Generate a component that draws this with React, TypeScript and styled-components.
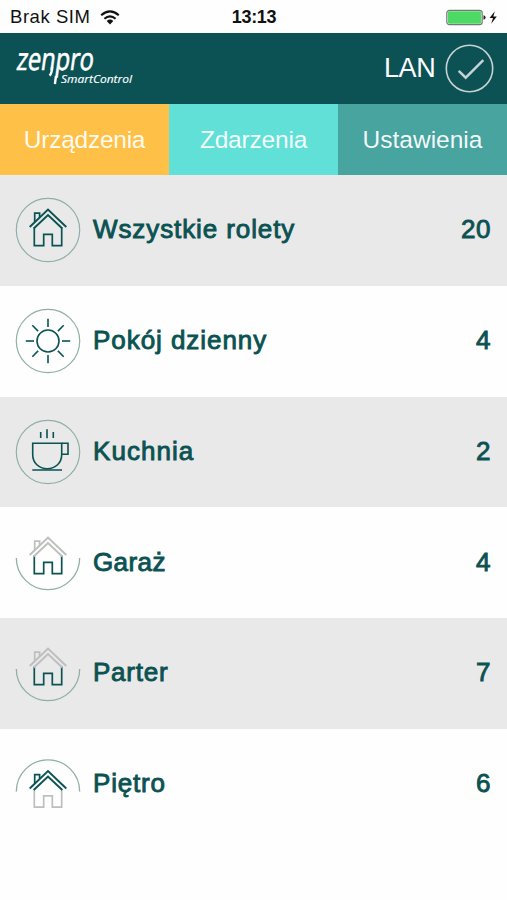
import React from 'react';
import styled, { createGlobalStyle } from 'styled-components';

const INK = '#0b5252';
const FADED = '#bcbfbe';

const GlobalStyle = createGlobalStyle`
  * { box-sizing: border-box; }
  body {
    margin: 0;
    background: #fefefe;
    font-family: "Liberation Sans", Arial, sans-serif;
  }
`;

const Screen = styled.main`
  width: 507px;
  height: 900px;
  overflow: hidden;
  display: flex;
  flex-direction: column;
`;

const StatusBar = styled.div`
  height: 32.5px;
  flex: none;
  display: grid;
  grid-template-columns: 1fr auto 1fr;
  align-items: center;
  padding: 2px 9px 0 10px;
  font-size: 18px;
  color: #111;
`;

const Carrier = styled.div`
  display: flex;
  align-items: center;
  gap: 10px;
  font-size: 18.5px;
  letter-spacing: 0.55px;
`;

const Clock = styled.div`
  font-weight: 700;
  font-size: 18px;
  letter-spacing: -0.3px;
`;

const Power = styled.div`
  display: flex;
  justify-content: flex-end;
`;

const Header = styled.header`
  height: 71.5px;
  flex: none;
  display: flex;
  align-items: center;
  justify-content: space-between;
  background: #0c5255;
  padding: 0 13.5px 0 14px;
`;

const Connection = styled.div`
  display: flex;
  align-items: center;
  gap: 9px;
  color: #fff;
  font-size: 27px;
  letter-spacing: -0.3px;
`;

const Tabs = styled.nav`
  height: 71px;
  flex: none;
  display: grid;
  grid-template-columns: repeat(3, 1fr);
`;

const Tab = styled.button<{ $color: string; $spacing: number }>`
  border: 0;
  padding: 0;
  background: ${(p) => p.$color};
  color: #fffffff2;
  font: 24.5px "Liberation Sans", Arial, sans-serif;
  letter-spacing: ${(p) => p.$spacing}px;
`;

const List = styled.ul`
  margin: 0;
  padding: 0;
  list-style: none;
`;

const Row = styled.li`
  height: 110.8px;
  display: flex;
  align-items: center;
  padding: 0 16px 0 15px;
  background: #fefefe;
  color: ${INK};
  font-size: 26px;

  &:nth-child(odd) {
    background: #e9e9e9;
  }
`;

const RoomName = styled.span<{ $spacing: number }>`
  flex: 1;
  margin-left: 12px;
  padding-bottom: 1.4px;
  letter-spacing: ${(p) => p.$spacing}px;
  -webkit-text-stroke: 0.9px ${INK};
`;

const Count = styled.span`
  padding-bottom: 1.4px;
  letter-spacing: 0.5px;
  -webkit-text-stroke: 0.9px ${INK};
`;

const IconSvg = styled.svg`
  display: block;
  flex: none;
  fill: none;
  overflow: visible;
`;

function Ring() {
  return <circle r="31.7" stroke="#8fb0a8" strokeWidth="1.2" />;
}

function House({ roof, body }: { roof: string; body: string }) {
  return (
    <g strokeWidth="1.7">
      <path d="M-13.7 -2.5V15.7H-4.3V4.4H4.3V15.7H13.7V-2.5" stroke={body} />
      <path d="M-18.3 -3L0 -20.5L18.3 -3M-14.3 -1.5L0 -15L14.3 -1.5" stroke={roof} strokeWidth="1.9" />
      <path d="M-13.3 -8V-16.8H-8.4V-13" stroke={roof} />
    </g>
  );
}

type IconKind = 'house' | 'sun' | 'cup' | 'lower' | 'upper';

function RoomIcon({ kind }: { kind: IconKind }) {
  switch (kind) {
    case 'house':
      return (
        <IconSvg width="66" height="66" viewBox="-33 -33 66 66">
          <Ring />
          <House roof={INK} body={INK} />
        </IconSvg>
      );
    case 'sun':
      return (
        <IconSvg width="66" height="66" viewBox="-33 -33 66 66">
          <Ring />
          <g stroke={INK} strokeWidth="1.6">
            <circle r="11" />
            {[0, 45, 90, 135, 180, 225, 270, 315].map((angle) => (
              <path key={angle} d="M0 -14V-22.2" transform={`rotate(${angle})`} />
            ))}
          </g>
        </IconSvg>
      );
    case 'cup':
      return (
        <IconSvg width="66" height="66" viewBox="-33 -33 66 66">
          <Ring />
          <g stroke={INK} strokeWidth="1.6">
            <path d="M-15.3 -8.7H13.7V2.5C13.7 11 7.5 16.7 -0.8 16.7S-15.3 11 -15.3 2.5Z" />
            <path d="M13.7 -8.7H20V2.3H13.7M-15.7 18H14" />
            <path d="M-7.3 -20V-14M-1 -22.8V-13.7M5.3 -20V-14" />
          </g>
        </IconSvg>
      );
    case 'lower':
      return (
        <IconSvg width="66" height="54" viewBox="-33 -22 66 54">
          <path d="M-31.7 0A31.7 31.7 0 0 0 31.7 0" stroke="#8fb0a8" strokeWidth="1.3" />
          <House roof={FADED} body={INK} />
        </IconSvg>
      );
    case 'upper':
      return (
        <IconSvg width="66" height="50" viewBox="-33 -32.5 66 50">
          <path d="M-31.7 0A31.7 31.7 0 0 1 31.7 0" stroke="#8fb0a8" strokeWidth="1.3" />
          <House roof={INK} body={FADED} />
        </IconSvg>
      );
  }
}

function WifiIcon() {
  return (
    <IconSvg width="20" height="15" viewBox="0 0 20 15" stroke="#111" strokeWidth="2.1">
      <path d="M1.2 5.2Q10 -2.4 18.8 5.2M4.4 8.7Q10 3.9 15.6 8.7" />
      <path d="M6.7 11Q10 8.2 13.3 11L10 14.5Z" fill="#111" stroke="none" />
    </IconSvg>
  );
}

function BatteryIcon() {
  return (
    <IconSvg width="52" height="17" viewBox="0 0 52 17">
      <rect x="0.8" y="1.3" width="35.4" height="14.4" rx="2.6" stroke="#777" strokeWidth="1.2" />
      <rect x="1.8" y="2.3" width="33.4" height="12.4" rx="1.4" fill="#4cd964" />
      <path d="M37.5 6.2Q39.6 6.5 39.6 8.5T37.5 10.8Z" fill="#222" />
      <path d="M48.8 2.2L43.6 9H47L45.2 14.8L50.8 7.6H47.3Z" fill="#111" />
    </IconSvg>
  );
}

function Logo() {
  return (
    <IconSvg width="122" height="46" viewBox="14 45 122 46">
      <g fill="#fff" fontFamily='"Open Sans", sans-serif'>
        <text
          transform="translate(15.8 69.6) skewX(-8)"
          fontSize="31"
          textLength="77"
          lengthAdjust="spacingAndGlyphs"
          stroke="#fff"
          strokeWidth="0.7"
        >
          zenpro
        </text>
        <text
          x="61"
          y="83.3"
          fontSize="11.5"
          fontStyle="italic"
          textLength="71"
          lengthAdjust="spacingAndGlyphs"
          stroke="#fff"
          strokeWidth="0.15"
        >
          SmartControl
        </text>
      </g>
      <path d="M52.1 67Q52 73 49.6 75.6M56 76L54.9 84" stroke="#fff" strokeWidth="2.4" />
    </IconSvg>
  );
}

function CheckBadge() {
  return (
    <IconSvg width="49" height="49" viewBox="-24.5 -24.5 49 49" stroke="#c6d2d5">
      <circle r="23.2" strokeWidth="1.6" />
      <path d="M-10.8 2.3L-3.8 9.2L13.8 -8.3" strokeWidth="2.5" />
    </IconSvg>
  );
}

const tabs = [
  { label: 'Urządzenia', color: '#fec046', spacing: -0.25 },
  { label: 'Zdarzenia', color: '#60e0d7', spacing: -0.2 },
  { label: 'Ustawienia', color: '#47a49f', spacing: 0 },
];

const rooms: { name: string; count: number; icon: IconKind; spacing: number }[] = [
  { name: 'Wszystkie rolety', count: 20, icon: 'house', spacing: 0.9 },
  { name: 'Pokój dzienny', count: 4, icon: 'sun', spacing: 0.95 },
  { name: 'Kuchnia', count: 2, icon: 'cup', spacing: 1.05 },
  { name: 'Garaż', count: 4, icon: 'lower', spacing: 0.4 },
  { name: 'Parter', count: 7, icon: 'lower', spacing: 0.75 },
  { name: 'Piętro', count: 6, icon: 'upper', spacing: 0.8 },
];

export default function App() {
  return (
    <Screen>
      <GlobalStyle />
      <StatusBar>
        <Carrier>
          Brak SIM
          <WifiIcon />
        </Carrier>
        <Clock>13:13</Clock>
        <Power>
          <BatteryIcon />
        </Power>
      </StatusBar>
      <Header>
        <Logo />
        <Connection>
          LAN
          <CheckBadge />
        </Connection>
      </Header>
      <Tabs>
        {tabs.map((tab) => (
          <Tab key={tab.label} $color={tab.color} $spacing={tab.spacing}>
            {tab.label}
          </Tab>
        ))}
      </Tabs>
      <List>
        {rooms.map((room) => (
          <Row key={room.name}>
            <RoomIcon kind={room.icon} />
            <RoomName $spacing={room.spacing}>{room.name}</RoomName>
            <Count>{room.count}</Count>
          </Row>
        ))}
      </List>
    </Screen>
  );
}
